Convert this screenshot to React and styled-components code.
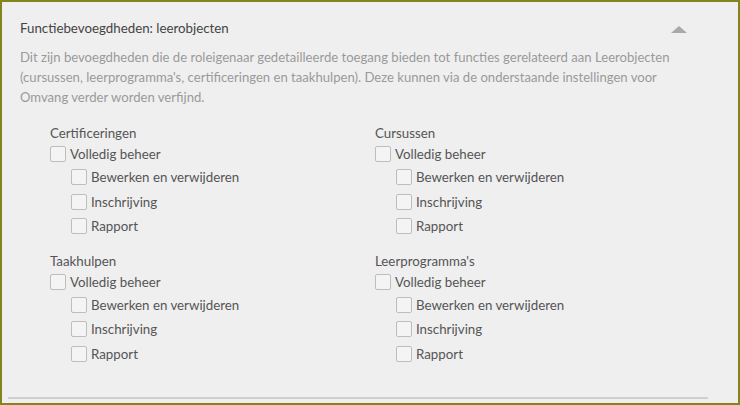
import React from 'react'
import styled, { createGlobalStyle } from 'styled-components'

const GlobalStyle = createGlobalStyle`
  html, body {
    margin: 0;
    padding: 0;
    background: #efefef;
  }
  body {
    font-family: Lato, "Open Sans", sans-serif;
  }
`;

const Panel = styled.section`
  width: 740px;
  height: 405px;
  box-sizing: border-box;
  border: 2px solid #84841c;
  background: #efefef;
  display: flex;
  flex-direction: column;
`;

const Body = styled.div`
  flex: 1;
  padding: 16px 0 0 18px;
`;

const Header = styled.div`
  display: flex;
  align-items: center;
  justify-content: space-between;
  padding-right: 51px;
`;

const Title = styled.h2`
  margin: 0;
  font-size: 13.3px;
  font-weight: 400;
  line-height: 20px;
  color: #444;
`;

const Caret = styled.span`
  width: 0;
  height: 0;
  border-left: 8px solid transparent;
  border-right: 8px solid transparent;
  border-bottom: 7px solid #a9a9a9;
  margin-top: 2px;
`;

const Desc = styled.p`
  margin: 9px 0 0;
  font-size: 13.1px;
  line-height: 20px;
  color: #9a9a9a;
  white-space: nowrap;
`;

const Groups = styled.div`
  display: grid;
  grid-template-columns: 325px 325px;
  row-gap: 12px;
  margin: 16px 0 0 30px;
`;

const Group = styled.div`
  display: flex;
  flex-direction: column;
`;

const GroupLabel = styled.div`
  font-size: 13.3px;
  line-height: 20px;
  color: #555;
`;

const Row = styled.label`
  display: flex;
  align-items: center;
  gap: 4px;
  height: ${p => (p.$sub ? '24.5px' : '22px')};
  padding-left: ${p => (p.$sub ? '21px' : '0')};
  font-size: 13.3px;
  color: #555;
`;

const Box = styled.span`
  width: 16px;
  height: 16px;
  box-sizing: border-box;
  border: 1.5px solid #bdbdbd;
  border-radius: 2px;
  background: #f4f4f4;
  flex-shrink: 0;
`;

const Rule = styled.hr`
  margin: 0 30px 4px 6px;
  border: none;
  border-top: 2px solid #cfcfcf;
`;

const groups = [
  'Certificeringen',
  'Cursussen',
  'Taakhulpen',
  "Leerprogramma's",
];

const subs = ['Bewerken en verwijderen', 'Inschrijving', 'Rapport'];

const App = () => {
  return (
    <>
      <GlobalStyle />
      <Panel>
        <Body>
          <Header>
            <Title>Functiebevoegdheden: leerobjecten</Title>
            <Caret />
          </Header>
          <Desc>
            Dit zijn bevoegdheden die de roleigenaar gedetailleerde toegang bieden tot functies gerelateerd aan Leerobjecten
            <br />
            (cursussen, leerprogramma's, certificeringen en taakhulpen). Deze kunnen via de onderstaande instellingen voor
            <br />
            Omvang verder worden verfijnd.
          </Desc>
          <Groups>
            {groups.map(g => (
              <Group key={g}>
                <GroupLabel>{g}</GroupLabel>
                <Row>
                  <Box />
                  Volledig beheer
                </Row>
                {subs.map(s => (
                  <Row $sub key={s}>
                    <Box />
                    {s}
                  </Row>
                ))}
              </Group>
            ))}
          </Groups>
        </Body>
        <Rule />
      </Panel>
    </>
  )
}

export default App
